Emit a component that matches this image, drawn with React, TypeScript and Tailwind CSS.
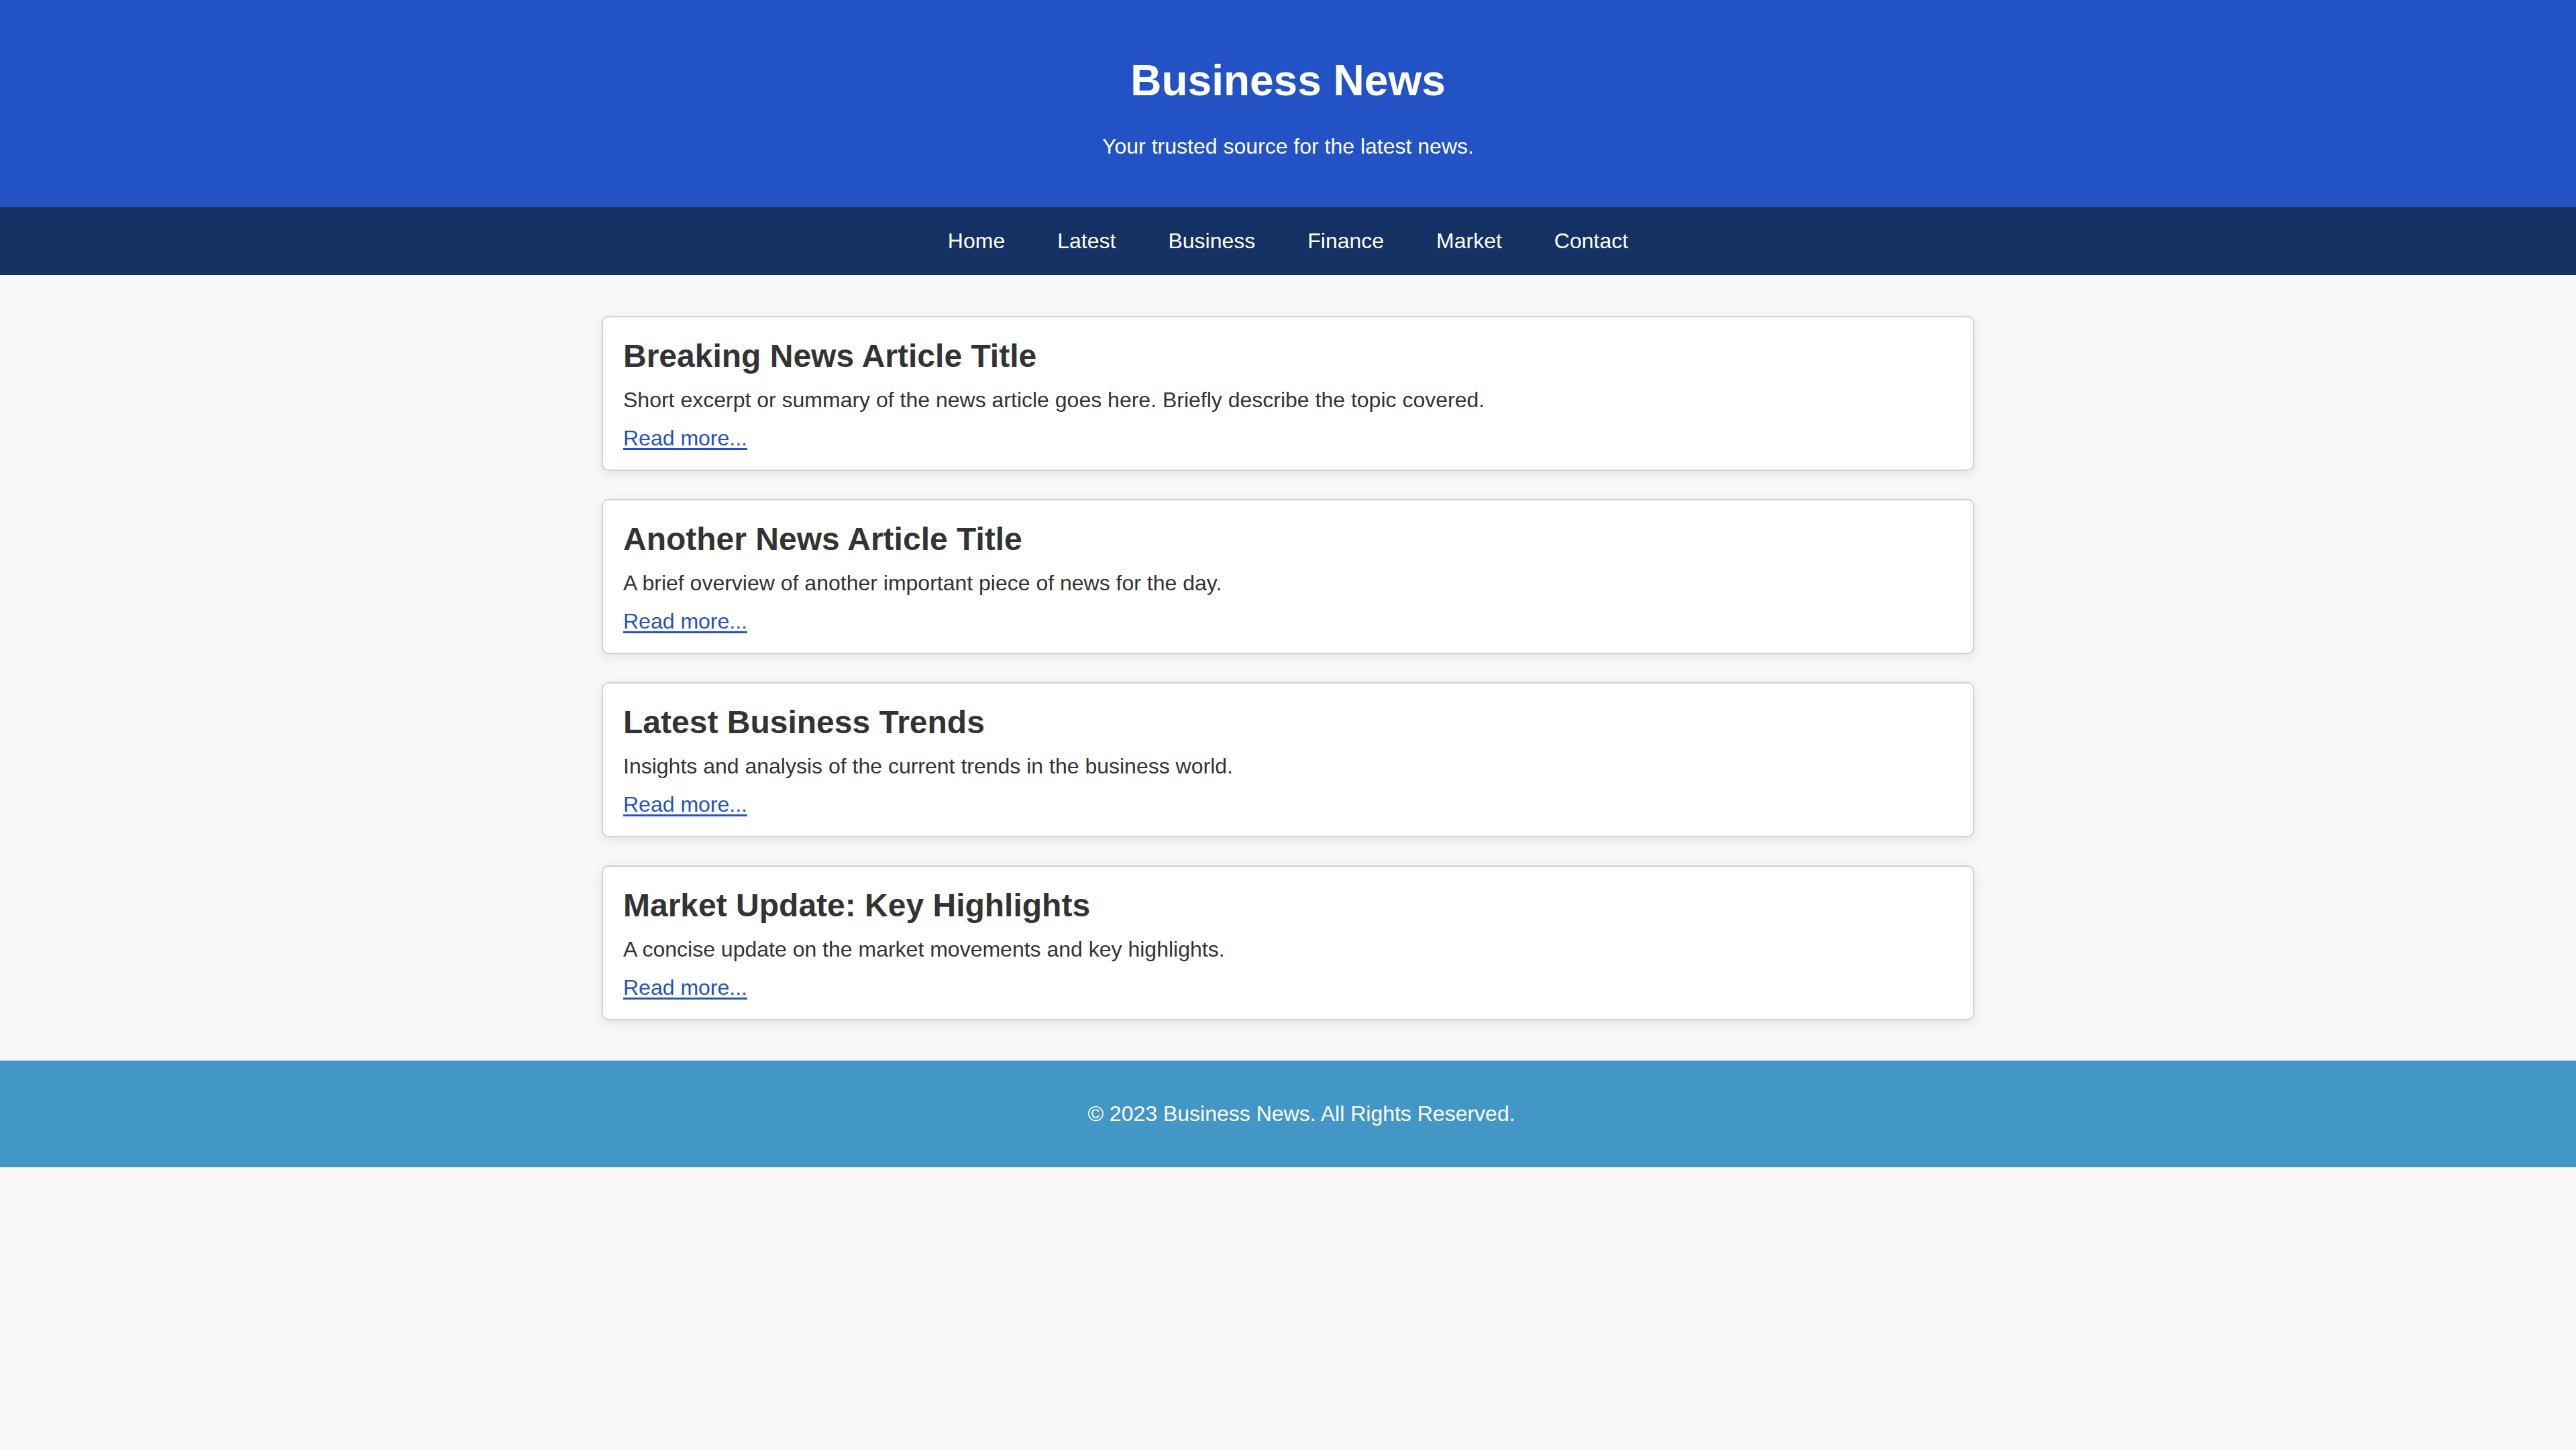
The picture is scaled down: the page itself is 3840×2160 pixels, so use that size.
import React from "react";

const articles = [
  {
    title: "Breaking News Article Title",
    text: "Short excerpt or summary of the news article goes here. Briefly describe the topic covered.",
  },
  {
    title: "Another News Article Title",
    text: "A brief overview of another important piece of news for the day.",
  },
  {
    title: "Latest Business Trends",
    text: "Insights and analysis of the current trends in the business world.",
  },
  {
    title: "Market Update: Key Highlights",
    text: "A concise update on the market movements and key highlights.",
  },
];

const navItems = ["Home", "Latest", "Business", "Finance", "Market", "Contact"];

export default function App() {
  return (
    <div
      className="min-h-[2160px] bg-[#f8f8f8] text-[#333]"
      style={{ fontFamily: '"Liberation Sans", Arial, Helvetica, sans-serif' }}
    >
      <header className="bg-[#2352c5] py-[40px] text-center text-white">
        <h1 className="mt-[43px] mb-[43px] text-[64px] font-bold leading-[74px]">Business News</h1>
        <p className="mb-[32px] text-[32px] leading-[37px]">Your trusted source for the latest news.</p>
      </header>

      <nav className="flex justify-center gap-[78px] bg-[#133263] py-[32px] text-[32px] leading-[37px] text-white">
        {navItems.map((item) => (
          <a key={item} href="#" className="text-white no-underline">
            {item}
          </a>
        ))}
      </nav>

      <main className="mx-auto flex w-[2046px] flex-col gap-[42px] pt-[61px] pb-[60px]">
        {articles.map((a) => (
          <article
            key={a.title}
            className="rounded-[10px] border-2 border-[#d2d2d2] bg-white px-[30px] pt-[30px] pb-[28px] shadow-[0_4px_18px_rgba(0,0,0,0.09)]"
          >
            <h2 className="mb-[20px] text-[48px] font-bold leading-[55px] text-[#333]">{a.title}</h2>
            <p className="mb-[20px] text-[32px] leading-[37px] text-[#333]">{a.text}</p>
            <a href="#" className="text-[32px] leading-[37px] text-[#2352c5] underline decoration-[3px] underline-offset-[4px]">
              Read more...
            </a>
          </article>
        ))}
      </main>

      <footer className="bg-[#4397c7] py-[61px] pl-[40px] text-center text-[32px] leading-[37px] text-white">
        <p>© 2023 Business News. All Rights Reserved.</p>
      </footer>
    </div>
  );
}
